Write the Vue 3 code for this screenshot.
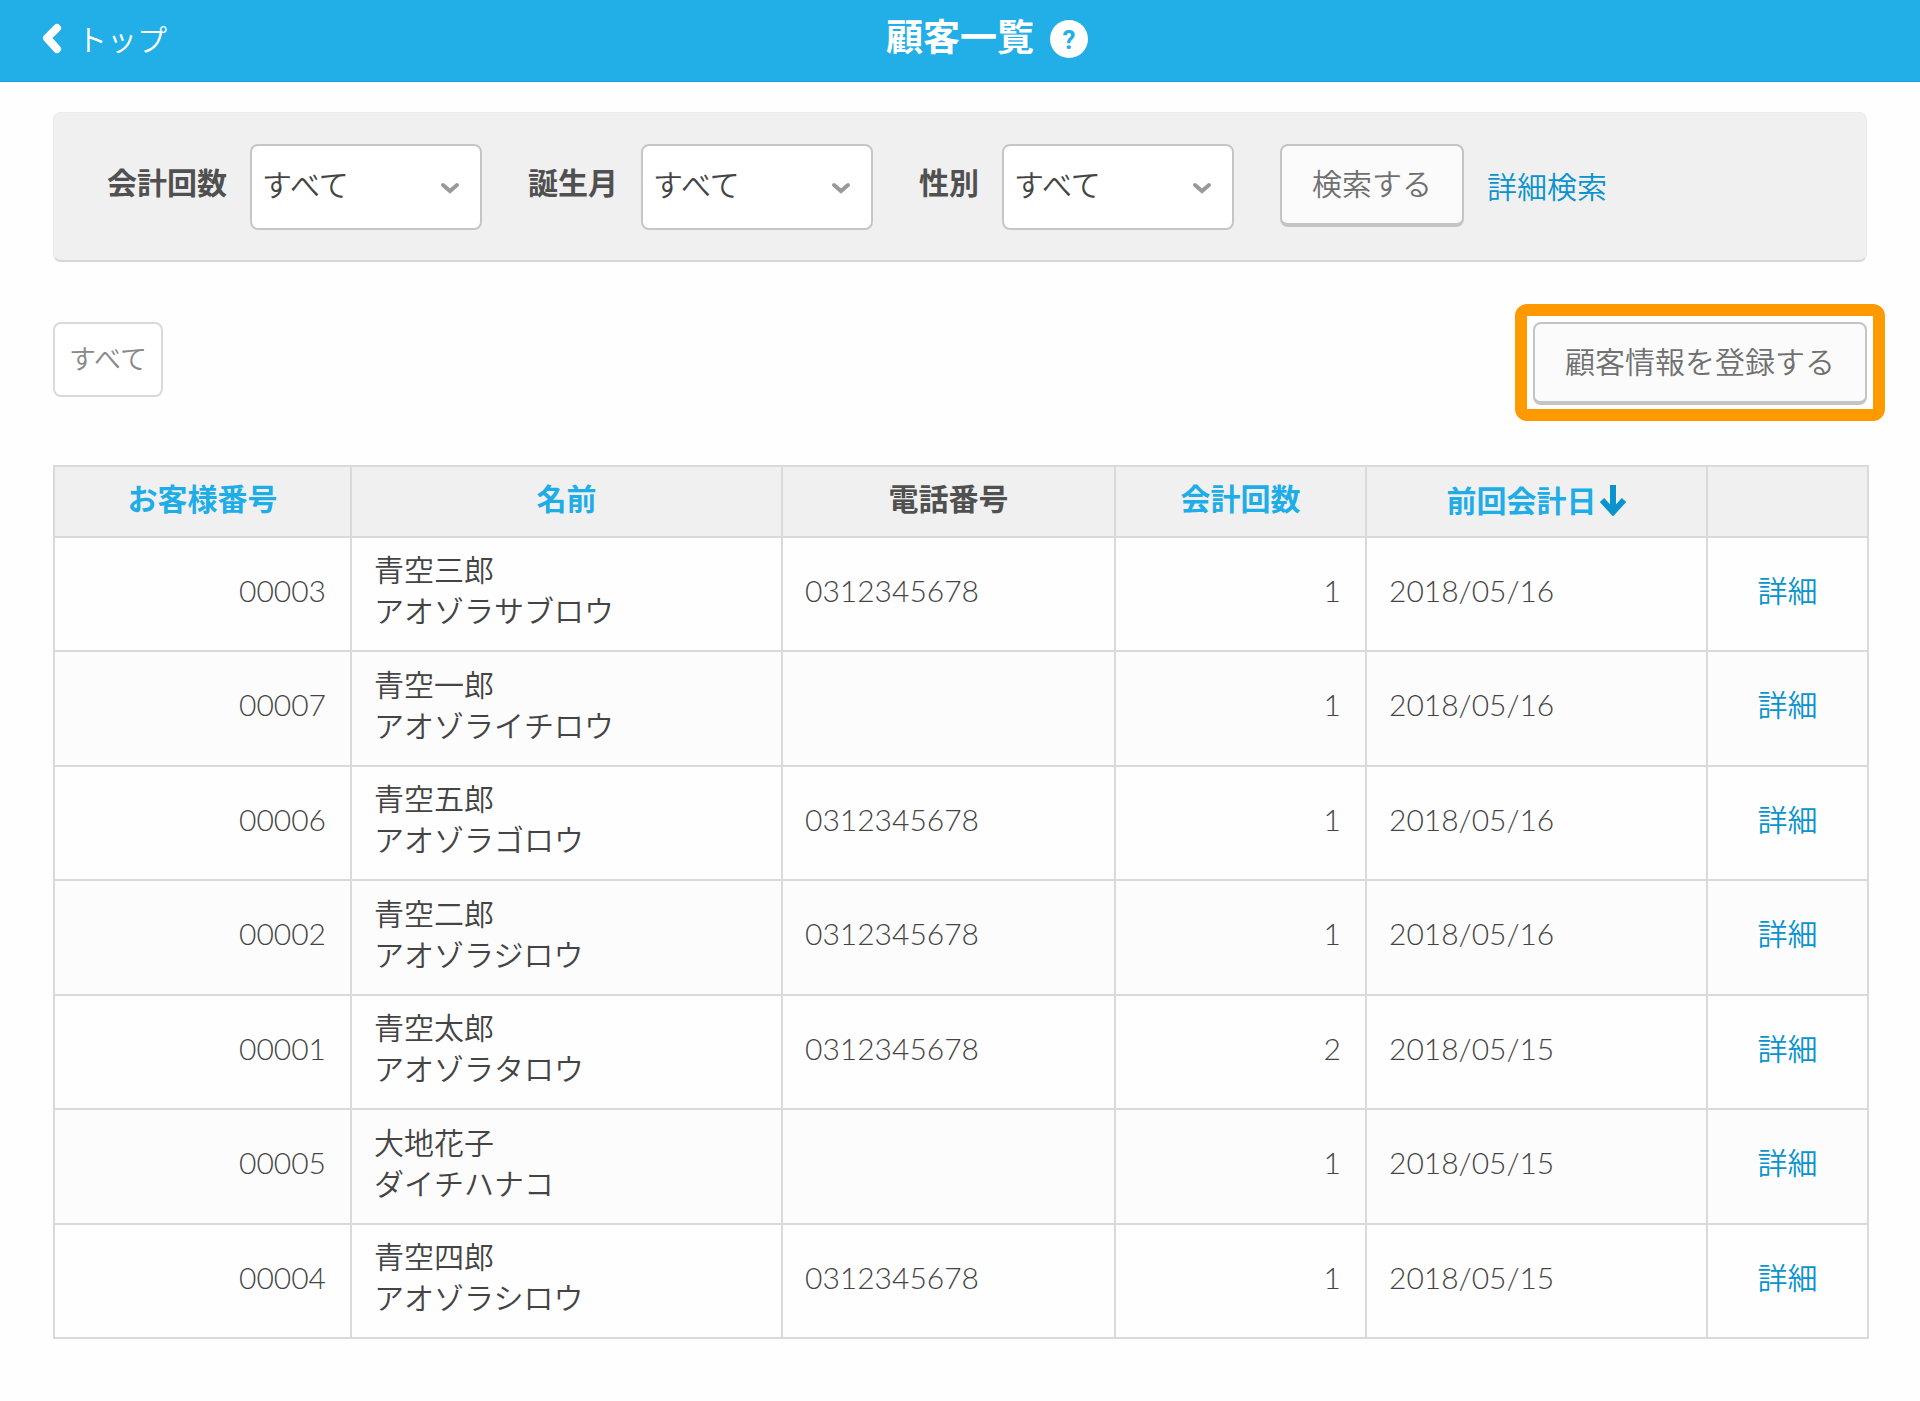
<script setup>
import { ref } from 'vue'

const filters = ref([
  { id: 'visits', label: '会計回数', value: 'すべて' },
  { id: 'birth-month', label: '誕生月', value: 'すべて' },
  { id: 'gender', label: '性別', value: 'すべて' },
])

const customers = [
  { id: '00003', name: '青空三郎', kana: 'アオゾラサブロウ', phone: '0312345678', visits: 1, last: '2018/05/16' },
  { id: '00007', name: '青空一郎', kana: 'アオゾライチロウ', phone: '', visits: 1, last: '2018/05/16' },
  { id: '00006', name: '青空五郎', kana: 'アオゾラゴロウ', phone: '0312345678', visits: 1, last: '2018/05/16' },
  { id: '00002', name: '青空二郎', kana: 'アオゾラジロウ', phone: '0312345678', visits: 1, last: '2018/05/16' },
  { id: '00001', name: '青空太郎', kana: 'アオゾラタロウ', phone: '0312345678', visits: 2, last: '2018/05/15' },
  { id: '00005', name: '大地花子', kana: 'ダイチハナコ', phone: '', visits: 1, last: '2018/05/15' },
  { id: '00004', name: '青空四郎', kana: 'アオゾラシロウ', phone: '0312345678', visits: 1, last: '2018/05/15' },
]
</script>

<template>
  <div class="page">
    <header class="topbar">
      <a class="back" href="#">
        <svg class="back-icon" viewBox="0 0 20 32" aria-hidden="true">
          <path d="M15 5 L5 15 L15 26" />
        </svg>
        <span>トップ</span>
      </a>
      <h1>顧客一覧</h1>
      <button class="help" type="button" aria-label="ヘルプ">?</button>
    </header>

    <main>
      <form class="search" @submit.prevent>
        <div v-for="f in filters" :key="f.id" class="field">
          <label :for="f.id">{{ f.label }}</label>
          <div class="select">
            <select :id="f.id" v-model="f.value">
              <option>すべて</option>
            </select>
            <svg class="caret" viewBox="0 0 20 12" aria-hidden="true">
              <path d="M3 3 L10 9 L17 3" />
            </svg>
          </div>
        </div>
        <button class="btn" type="submit">検索する</button>
        <a class="advanced" href="#">詳細検索</a>
      </form>

      <div class="actions">
        <button class="tag" type="button">すべて</button>
        <button class="btn highlighted" type="button">顧客情報を登録する</button>
      </div>

      <table>
        <colgroup>
          <col class="c-id" />
          <col class="c-name" />
          <col class="c-phone" />
          <col class="c-visits" />
          <col class="c-last" />
          <col class="c-detail" />
        </colgroup>
        <thead>
          <tr>
            <th><a href="#">お客様番号</a></th>
            <th><a href="#">名前</a></th>
            <th>電話番号</th>
            <th><a href="#">会計回数</a></th>
            <th>
              <a class="sorted" href="#">
                前回会計日
                <svg viewBox="0 0 28 32" aria-hidden="true">
                  <path d="M14 1 V28 M3 16 L14 28 L25 16" />
                </svg>
              </a>
            </th>
            <th></th>
          </tr>
        </thead>
        <tbody>
          <tr v-for="c in customers" :key="c.id">
            <td class="num">{{ c.id }}</td>
            <td>{{ c.name }}<br />{{ c.kana }}</td>
            <td>{{ c.phone }}</td>
            <td class="num">{{ c.visits }}</td>
            <td>{{ c.last }}</td>
            <td class="detail"><a href="#">詳細</a></td>
          </tr>
        </tbody>
      </table>
    </main>
  </div>
</template>

<style>
body {
  margin: 0;
  background: #fefefe;
}
</style>

<style scoped>
.page {
  font-family: Lato, "Noto Sans CJK JP", sans-serif;
  font-size: 30px;
  font-weight: 350;
  line-height: 40px;
  color: #444;
}

button,
select {
  font: inherit;
  margin: 0;
}

button {
  cursor: pointer;
}

a {
  color: #0a93cd;
  text-decoration: none;
}

.topbar {
  display: grid;
  grid-template-columns: 1fr auto 1fr;
  align-items: center;
  box-sizing: border-box;
  height: 82px;
  padding: 0 42px 4px;
  background: #22aee6;
  border-bottom: 1px solid #149fd8;
  color: #fff;
}

.back {
  display: flex;
  align-items: center;
  gap: 15px;
  color: #fff;
}

.back-icon {
  width: 20px;
  height: 32px;
  fill: none;
  stroke: #fff;
  stroke-width: 8;
  stroke-linecap: round;
  stroke-linejoin: round;
}

h1 {
  margin: 0;
  padding-bottom: 4px;
  font-size: 37px;
  font-weight: 700;
}

.help {
  width: 38px;
  height: 38px;
  margin-left: 16px;
  padding: 2px 0 0;
  border: 0;
  border-radius: 50%;
  background: #fff;
  color: #22aee6;
  font-family: Roboto, sans-serif;
  font-size: 26px;
  font-weight: 700;
  line-height: 36px;
  text-align: center;
}

main {
  padding: 30px 53px 62px;
}

.search {
  display: flex;
  align-items: flex-start;
  padding: 31px 53px 30px;
  background: #f0f0f0;
  border: 1px solid #ebebeb;
  border-bottom: 2px solid #d6d6d6;
  border-radius: 8px;
}

.field {
  display: flex;
  align-items: flex-start;
  gap: 23px;
  margin-right: 46px;
}

.field label,
.advanced {
  padding: 18px 0;
}

.field label {
  font-weight: 700;
  color: #505050;
}

.select {
  position: relative;
}

.select select {
  appearance: none;
  display: block;
  width: 232px;
  height: 86px;
  padding: 0 48px 6px 10px;
  border: 2px solid #c6c6c6;
  border-radius: 8px;
  background: #fff;
  color: #444;
}

.caret {
  position: absolute;
  right: 22px;
  top: 38px;
  width: 20px;
  height: 12px;
  fill: none;
  stroke: #999;
  stroke-width: 4;
  stroke-linecap: round;
  pointer-events: none;
}

.btn {
  height: 83px;
  padding: 0 30px 4px;
  border: 2px solid #c4c4c4;
  border-bottom-width: 4px;
  border-radius: 8px;
  background: #fbfbfb;
  color: #707070;
}

.advanced {
  margin: 4px 0 0 23px;
}

.actions {
  display: flex;
  align-items: flex-start;
  justify-content: space-between;
  margin: 60px 0;
}

.tag {
  height: 75px;
  padding: 0 14px 2px;
  border: 2px solid #d9d9d9;
  border-radius: 8px;
  background: #fff;
  color: #888;
  font-size: 27px;
}

.highlighted {
  position: relative;
}

.highlighted::after {
  content: "";
  position: absolute;
  inset: -20px;
  border: 12px solid #ff9900;
  border-radius: 12px;
}

table {
  width: 100%;
  table-layout: fixed;
  border-collapse: collapse;
}

.c-id { width: 297px; }
.c-name { width: 431px; }
.c-phone { width: 333px; }
.c-visits { width: 251px; }
.c-last { width: 341px; }
.c-detail { width: 161px; }

th,
td {
  box-sizing: border-box;
  padding: 0 22px;
  border: 2px solid #dadada;
  text-align: left;
}

th {
  height: 71px;
  padding-bottom: 8px;
  background: #f0f0f0;
  color: #505050;
  font-weight: 700;
  text-align: center;
}

th a {
  color: #1eade6;
}

.sorted {
  display: flex;
  align-items: center;
  justify-content: center;
  gap: 2px;
  padding-top: 4px;
}

.sorted svg {
  width: 28px;
  height: 32px;
  fill: none;
  stroke: #0a93cd;
  stroke-width: 6;
}

td {
  height: 114px;
  padding-bottom: 8px;
  line-height: 41px;
}

tr:nth-child(even) td {
  height: 115px;
  background: #fcfcfc;
}

td.num {
  padding-right: 24px;
  text-align: right;
}

td.detail {
  text-align: center;
}
</style>
